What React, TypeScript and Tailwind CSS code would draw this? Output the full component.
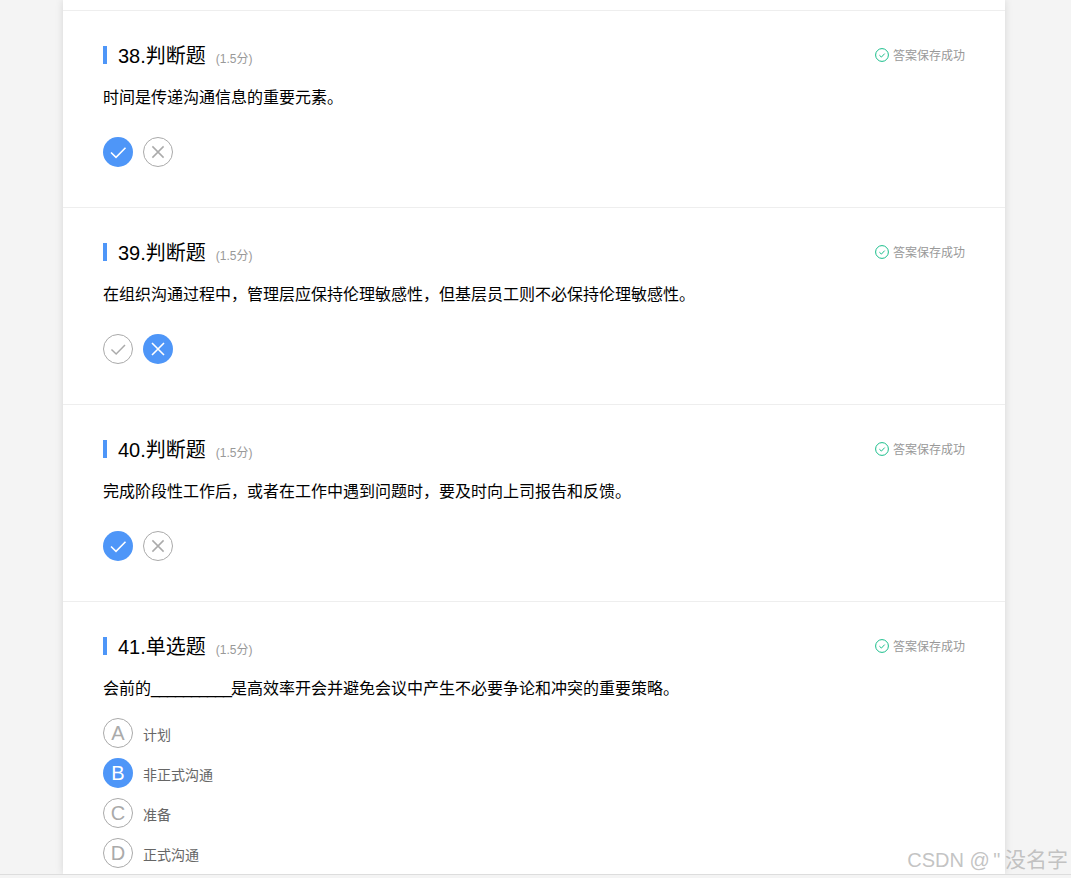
import React from 'react';

const font = { fontFamily: '"Liberation Sans", "Noto Sans CJK SC", sans-serif' };

const CheckIcon = ({ className }: { className: string }) => (
  <svg viewBox="0 0 30 30" className={className} fill="none" strokeWidth="1.6">
    <path d="M8 15.5l5 4.8 9.5-9.6" />
  </svg>
);

const CrossIcon = ({ className }: { className: string }) => (
  <svg viewBox="0 0 30 30" className={className} fill="none" strokeWidth="1.6">
    <path d="M9 9l12 12M21 9L9 21" />
  </svg>
);

const Judge = ({ answer }: { answer: boolean }) => (
  <div className="flex gap-[10px] mt-[27px]">
    <div className={`w-[30px] h-[30px] rounded-full ${answer ? 'bg-[#4e96f8]' : 'border border-[#aaaaaa]'}`}>
      <CheckIcon className={`w-full h-full ${answer ? 'stroke-white' : 'stroke-[#aaaaaa]'}`} />
    </div>
    <div className={`w-[30px] h-[30px] rounded-full ${!answer ? 'bg-[#4e96f8]' : 'border border-[#aaaaaa]'}`}>
      <CrossIcon className={`w-full h-full ${!answer ? 'stroke-white' : 'stroke-[#aaaaaa]'}`} />
    </div>
  </div>
);

const Header = ({ title }: { title: string }) => (
  <div className="flex items-start justify-between">
    <div className="flex items-center h-[18px] border-l-4 border-[#4e96f8] pl-[11px]">
      <span className="text-[20px] leading-[24px] text-black mt-[2px]">{title}</span>
      <span className="text-[12px] text-[#999999] ml-[10px] mt-[8px]">(1.5分)</span>
    </div>
    <div className="flex items-center gap-1 text-[12px] leading-[18px] text-[#999999] mt-[1px]">
      <svg viewBox="0 0 14 14" className="w-[14px] h-[14px] -translate-y-px" fill="none" stroke="#19be8b" strokeWidth="1">
        <circle cx="7" cy="7" r="6.4" />
        <path d="M4.4 7.2l2 1.9 3.3-3.5" />
      </svg>
      <span>答案保存成功</span>
    </div>
  </div>
);

const questions = [
  { title: '38.判断题', text: '时间是传递沟通信息的重要元素。', answer: true },
  { title: '39.判断题', text: '在组织沟通过程中，管理层应保持伦理敏感性，但基层员工则不必保持伦理敏感性。', answer: false },
  { title: '40.判断题', text: '完成阶段性工作后，或者在工作中遇到问题时，要及时向上司报告和反馈。', answer: true },
];

const options = [
  { key: 'A', label: '计划', picked: false },
  { key: 'B', label: '非正式沟通', picked: true },
  { key: 'C', label: '准备', picked: false },
  { key: 'D', label: '正式沟通', picked: false },
];

const App = () => {
  return (
    <div className="relative h-[878px] overflow-hidden bg-[#f4f4f4]" style={font}>
      <div className="h-[874px] border-b border-[#dddddd] box-content overflow-hidden">
        <div className="ml-[63px] w-[942px] h-[874px] bg-white shadow-[0_0_8px_rgba(0,0,0,0.12)]">
          <div className="h-[11px] border-b border-[#eeeeee]" />
          {questions.map((q) => (
            <div key={q.title} className="h-[197px] border-b border-[#eeeeee] pt-[35px] px-10">
              <Header title={q.title} />
              <p className="text-[16px] leading-[24px] text-black mt-[21px]">{q.text}</p>
              <Judge answer={q.answer} />
            </div>
          ))}
          <div className="pt-[35px] px-10">
            <Header title="41.单选题" />
            <p className="text-[16px] leading-[24px] text-black mt-[21px]">
              会前的<span className="tracking-[-0.9px]">__________</span>是高效率开会并避免会议中产生不必要争论和冲突的重要策略。
            </p>
            <div className="mt-[17px] flex flex-col gap-[10px]">
              {options.map((o) => (
                <div key={o.key} className="flex items-center gap-[10px]">
                  <div
                    className={`w-[30px] h-[30px] rounded-full flex items-center justify-center text-[20px] ${
                      o.picked ? 'bg-[#4e96f8] text-white' : 'border border-[#aaaaaa] text-[#aaaaaa]'
                    }`}
                  >
                    {o.key}
                  </div>
                  <span className="text-[14px] text-[#666666] pt-[4px]">{o.label}</span>
                </div>
              ))}
            </div>
          </div>
        </div>
      </div>
      <div className="absolute right-[3px] bottom-[4px] text-[20px] leading-[28px] text-[#b4b4b4]/80 whitespace-pre">
        CSDN @ <span className="-ml-[2px]">"</span> <span className="text-[21px] -ml-[1px]">没名字</span>
      </div>
    </div>
  );
};

export default App;
